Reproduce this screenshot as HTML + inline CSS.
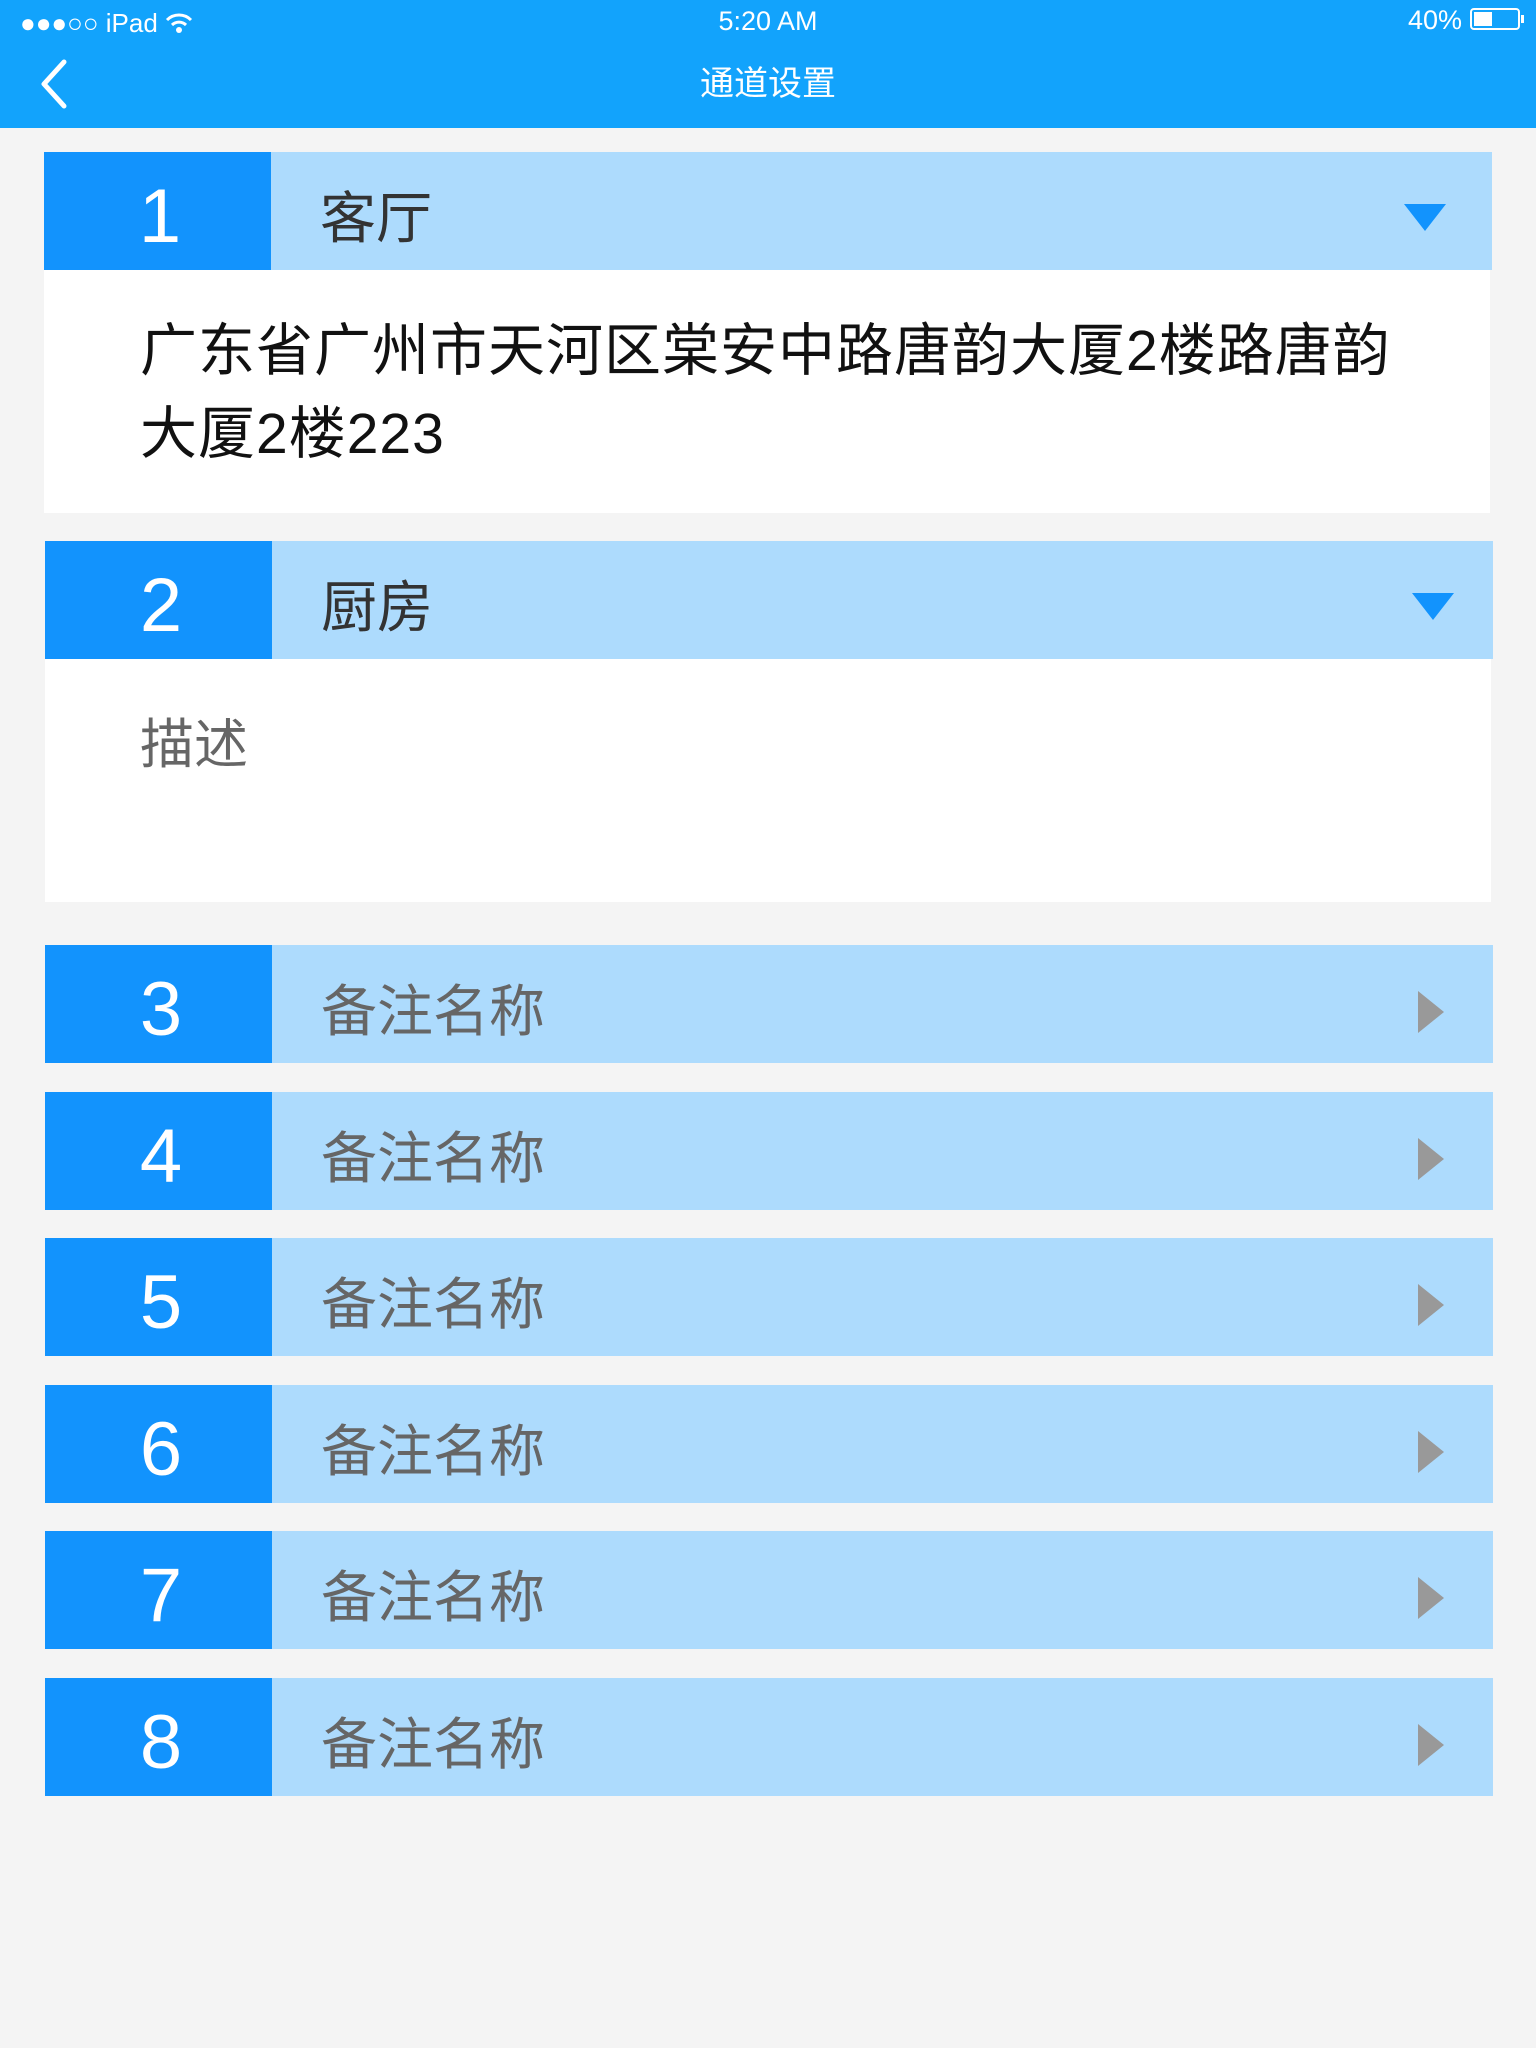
<!DOCTYPE html>
<html><head><meta charset="utf-8"><style>
body{margin:0;width:1536px;height:2048px;background:#f4f4f4;font-family:"Liberation Sans","Noto Sans CJK SC",sans-serif;position:relative;overflow:hidden}
.nav{position:absolute;left:0;top:0;width:1536px;height:128px;background:#12a3fc;color:#fff}
.abs{position:absolute}
.hdr{position:absolute;left:44px;width:1448px;height:118px;background:#addbfd}
.num{position:absolute;left:0;top:6px;width:232px;height:118px;color:#fff;font-size:76px;line-height:118px;text-align:center}
.nb{position:absolute;left:0;top:0;width:227px;height:118px;background:#1293fd}
.lbl{position:absolute;left:276px;top:8px;line-height:118px;font-size:56px;color:#666}
.rt{position:absolute;left:1373px;top:46px;width:0;height:0;border-top:21px solid transparent;border-bottom:21px solid transparent;border-left:26px solid #999}
.dn{position:absolute;left:1360px;top:52px;width:0;height:0;border-left:21px solid transparent;border-right:21px solid transparent;border-top:27px solid #1293fd}
.body{position:absolute;left:44px;width:1446px;background:#fff}
</style></head><body>
<div class="nav">
 <div class="abs" style="left:20px;top:8px;font-size:26px;">●●●○○ iPad
  <svg width="28" height="22" viewBox="0 0 28 22" style="vertical-align:-2px"><path d="M2 8 A17 17 0 0 1 26 8" stroke="#fff" stroke-width="3" fill="none"/><path d="M7 13 A10 10 0 0 1 21 13" stroke="#fff" stroke-width="3" fill="none"/><circle cx="14" cy="18" r="3" fill="#fff"/></svg></div>
 <div class="abs" style="left:0;width:1536px;top:6px;text-align:center;font-size:27px;">5:20 AM</div>
 <div class="abs" style="left:1408px;top:5px;font-size:27px;">40%</div>
 <div class="abs" style="left:1470px;top:8px;width:50px;height:22px;border:2px solid #fff;border-radius:4px;box-sizing:border-box"><div style="position:absolute;left:2px;top:2px;width:18px;height:14px;background:#fff"></div></div>
 <div class="abs" style="left:1521px;top:15px;width:3px;height:8px;background:#fff"></div>
 <svg class="abs" style="left:36px;top:58px" width="34" height="52" viewBox="0 0 34 52"><path d="M28 4 L8 26 L28 48" stroke="#fff" stroke-width="5" fill="none" stroke-linecap="round" stroke-linejoin="round"/></svg>
 <div class="abs" style="left:0;width:1536px;top:56px;text-align:center;font-size:34px;">通道设置</div>
</div>

<div class="hdr" style="top:152px"><div class="nb"></div><div class="num">1</div><div class="lbl" style="color:#333">客厅</div><div class="dn"></div></div>
<div class="body" style="top:270px;height:243px">
 <div class="abs" style="left:96px;top:40px;font-size:57px;letter-spacing:1px;line-height:83px;color:#111;width:1340px;white-space:nowrap">广东省广州市天河区棠安中路唐韵大厦2楼路唐韵<br>大厦2楼223</div>
</div>

<div class="hdr" style="top:541px;left:45px"><div class="nb"></div><div class="num">2</div><div class="lbl" style="color:#333">厨房</div><div class="dn" style="left:1367px"></div></div>
<div class="body" style="top:659px;height:243px;left:45px">
 <div class="abs" style="left:95px;top:54px;font-size:54px;line-height:64px;color:#666">描述</div>
</div>

<div class="hdr" style="top:945px;left:45px"><div class="nb"></div><div class="num">3</div><div class="lbl">备注名称</div><div class="rt"></div></div>
<div class="hdr" style="top:1092px;left:45px"><div class="nb"></div><div class="num">4</div><div class="lbl">备注名称</div><div class="rt"></div></div>
<div class="hdr" style="top:1238px;left:45px"><div class="nb"></div><div class="num">5</div><div class="lbl">备注名称</div><div class="rt"></div></div>
<div class="hdr" style="top:1385px;left:45px"><div class="nb"></div><div class="num">6</div><div class="lbl">备注名称</div><div class="rt"></div></div>
<div class="hdr" style="top:1531px;left:45px"><div class="nb"></div><div class="num">7</div><div class="lbl">备注名称</div><div class="rt"></div></div>
<div class="hdr" style="top:1678px;left:45px"><div class="nb"></div><div class="num">8</div><div class="lbl">备注名称</div><div class="rt"></div></div>
</body></html>
